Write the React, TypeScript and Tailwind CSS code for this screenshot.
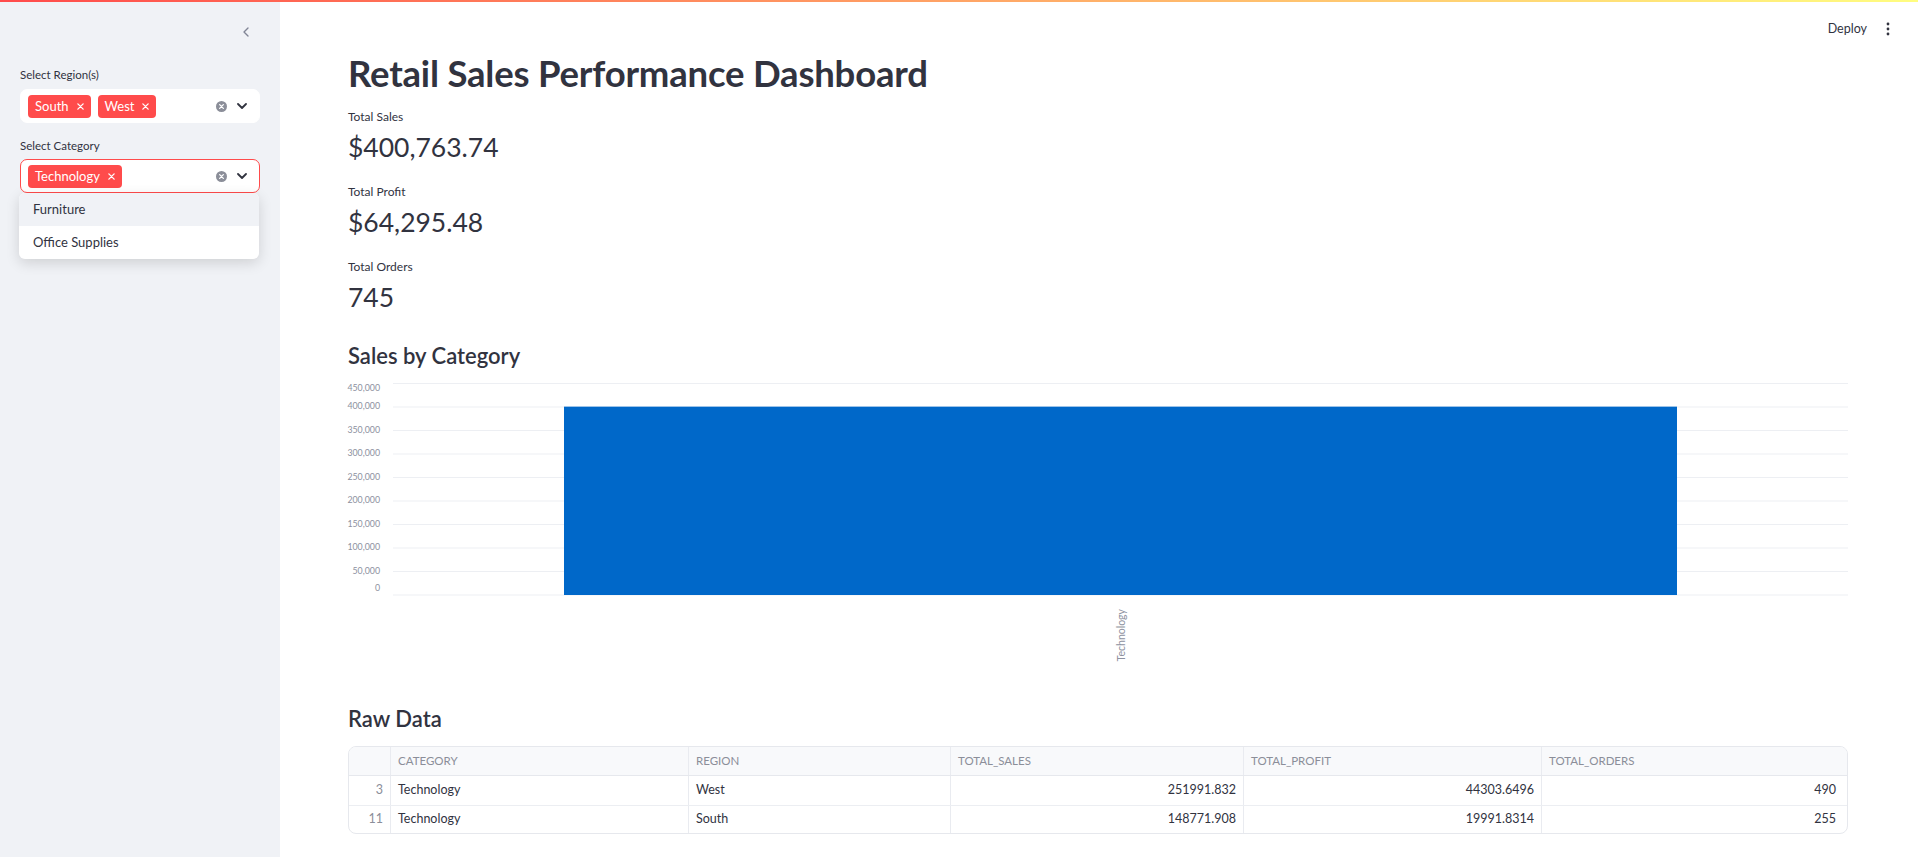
import { ChevronLeft } from "lucide-react"

const FONT = "font-['Lato','Noto_Sans',sans-serif]"

const GRID_TICKS = [0, 50000, 100000, 150000, 200000, 250000, 300000, 350000, 400000, 450000]

const ROWS = [
  { idx: 3, category: "Technology", region: "West", sales: "251991.832", profit: "44303.6496", orders: "490" },
  { idx: 11, category: "Technology", region: "South", sales: "148771.908", profit: "19991.8314", orders: "255" },
]

function Tag({ label }: { label: string }) {
  return (
    <span className="flex h-[23px] items-center gap-[8px] rounded-[4px] bg-[#ff4b4b] pl-[7px] pr-[7px] text-[13px] leading-none text-white">
      {label}
      <svg width="7" height="7" viewBox="0 0 8 8" fill="none" stroke="currentColor" strokeWidth="1.5" strokeLinecap="round">
        <path d="M1 1l6 6M7 1L1 7" />
      </svg>
    </span>
  )
}

function MultiSelect({ tags, focused }: { tags: string[]; focused?: boolean }) {
  return (
    <div
      className={`flex h-[34px] items-center rounded-[7px] border bg-white pl-[7px] pr-[12px] ${
        focused ? "border-[#ff4b4b]" : "border-white"
      }`}
    >
      <div className="flex flex-1 items-center gap-[7px]">
        {tags.map((t) => (
          <Tag key={t} label={t} />
        ))}
      </div>
      {/* clear all */}
      <svg width="11" height="11" viewBox="0 0 12 12" className="mr-[10px]">
        <circle cx="6" cy="6" r="6" fill="#8b8e99" />
        <path d="M4 4l4 4M8 4L4 8" stroke="#fff" strokeWidth="1.4" strokeLinecap="round" />
      </svg>
      <svg width="10" height="6" viewBox="0 0 10 6" fill="none" stroke="#31333f" strokeWidth="1.8" strokeLinecap="round" strokeLinejoin="round">
        <path d="M1 1l4 4 4-4" />
      </svg>
    </div>
  )
}

function Sidebar() {
  return (
    <aside className="flex w-[280px] shrink-0 flex-col bg-[#f0f2f6] px-[20px] pt-[24px] text-[#31333f]">
      <div className="flex h-[16px] items-center justify-end pr-[6px]">
        <ChevronLeft size={16} strokeWidth={2} className="text-[#808495]" />
      </div>

      <label className="mt-[27px] h-[16px] text-[11.5px] leading-[16px]">Select Region(s)</label>
      <div className="mt-[6px]">
        <MultiSelect tags={["South", "West"]} />
      </div>

      <label className="mt-[15px] h-[16px] text-[11.5px] leading-[16px]">Select Category</label>
      <div className="relative mt-[5px]">
        <MultiSelect tags={["Technology"]} focused />
        {/* open options list */}
        <div className="absolute left-[-1px] top-[34px] z-10 w-[240px] overflow-hidden rounded-[6px] bg-white text-[13px] shadow-[0_4px_14px_rgba(0,0,0,0.14)]">
          <div className="flex h-[33px] items-center bg-[#f0f2f6] pl-[14px]">Furniture</div>
          <div className="flex h-[33px] items-center pl-[14px]">Office Supplies</div>
        </div>
      </div>
    </aside>
  )
}

function Metric({ label, value }: { label: string; value: string }) {
  return (
    <div className="flex h-[60px] flex-col">
      <div className="h-[16px] text-[12px] leading-[16px]">{label}</div>
      <div className="h-[44px] text-[26.5px] leading-[44px]">{value}</div>
    </div>
  )
}

function SalesChart() {
  const y0 = 221
  const step = 23.5
  const barTop = y0 - (400763.74 / 50000) * step
  return (
    <svg width={1500} height={290} className="block overflow-visible">
      {GRID_TICKS.map((t, i) => {
        const y = y0 - i * step
        const labelY = i === 0 ? y - 6 : i === GRID_TICKS.length - 1 ? y + 5 : y
        return (
          <g key={t}>
            <line x1={45} x2={1500} y1={y} y2={y} stroke="#edeff3" strokeWidth={1} />
            <text x={32} y={labelY} textAnchor="end" dominantBaseline="middle" fontSize={8.8} fill="#8d91a0">
              {t.toLocaleString("en-US")}
            </text>
          </g>
        )
      })}
      <rect x={216} y={barTop} width={1113} height={y0 - barTop} fill="#0068c9" />
      <text
        x={777}
        y={235}
        transform="rotate(-90 777 235)"
        textAnchor="end"
        fontSize={10.5}
        fill="#8d91a0"
      >
        Technology
      </text>
    </svg>
  )
}

function RawTable() {
  const cols = "grid grid-cols-[42px_298px_262px_293px_298px_301px]"
  const cell = "flex items-center border-r border-[#e9ebf0] px-[7px]"
  return (
    <div className="w-[1500px] overflow-hidden rounded-[8px] border border-[#e6e8ed] text-[12.5px]">
      <div className={`${cols} h-[29px] border-b border-[#e6e8ed] bg-[#f8f9fb] text-[11.5px] uppercase text-[#8b8e99]`}>
        <div className={cell}></div>
        <div className={cell}>Category</div>
        <div className={cell}>Region</div>
        <div className={cell}>Total_Sales</div>
        <div className={cell}>Total_Profit</div>
        <div className="flex items-center px-[7px]">Total_Orders</div>
      </div>
      {ROWS.map((r, i) => (
        <div
          key={r.idx}
          className={`${cols} ${i === 0 ? "h-[30px] border-b border-[#eceef2]" : "h-[27px]"} text-[#31333f]`}
        >
          <div className={`${cell} justify-end text-[#8b8e99]`}>{r.idx}</div>
          <div className={cell}>{r.category}</div>
          <div className={cell}>{r.region}</div>
          <div className={`${cell} justify-end`}>{r.sales}</div>
          <div className={`${cell} justify-end`}>{r.profit}</div>
          <div className="flex items-center justify-end px-[7px]">{r.orders}</div>
        </div>
      ))}
    </div>
  )
}

export default function App() {
  return (
    <div className={`relative flex h-[857px] w-full overflow-hidden bg-white text-[#31333f] ${FONT}`}>
      {/* top decoration bar */}
      <div className="absolute inset-x-0 top-0 z-20 h-[2px] bg-[linear-gradient(90deg,#ff4b4b,#fffd80)]" />

      <Sidebar />

      <main className="relative flex-1 pl-[68px] pr-[70px] pt-[51px]">
        {/* header actions */}
        <div className="absolute right-[28px] top-[21px] flex items-center gap-[19px]">
          <span className="text-[12.5px] leading-[16px]">Deploy</span>
          <svg width="4" height="14" viewBox="0 0 4 14" fill="#31333f">
            <circle cx="2" cy="2" r="1.4" />
            <circle cx="2" cy="7" r="1.4" />
            <circle cx="2" cy="12" r="1.4" />
          </svg>
        </div>

        <h1 className="h-[44px] text-[36.5px] font-bold leading-[44px] tracking-[-0.2px]">
          Retail Sales Performance Dashboard
        </h1>

        <div className="mt-[14px] flex flex-col gap-[15px]">
          <Metric label="Total Sales" value="$400,763.74" />
          <Metric label="Total Profit" value="$64,295.48" />
          <Metric label="Total Orders" value="745" />
        </div>

        <h3 className="mt-[21px] h-[32px] text-[22px] font-semibold leading-[32px]">Sales by Category</h3>
        <div className="mt-[2px]">
          <SalesChart />
        </div>

        <h3 className="mt-[39px] h-[32px] text-[22px] font-semibold leading-[32px]">Raw Data</h3>
        <div className="mt-[11px]">
          <RawTable />
        </div>
      </main>
    </div>
  )
}
